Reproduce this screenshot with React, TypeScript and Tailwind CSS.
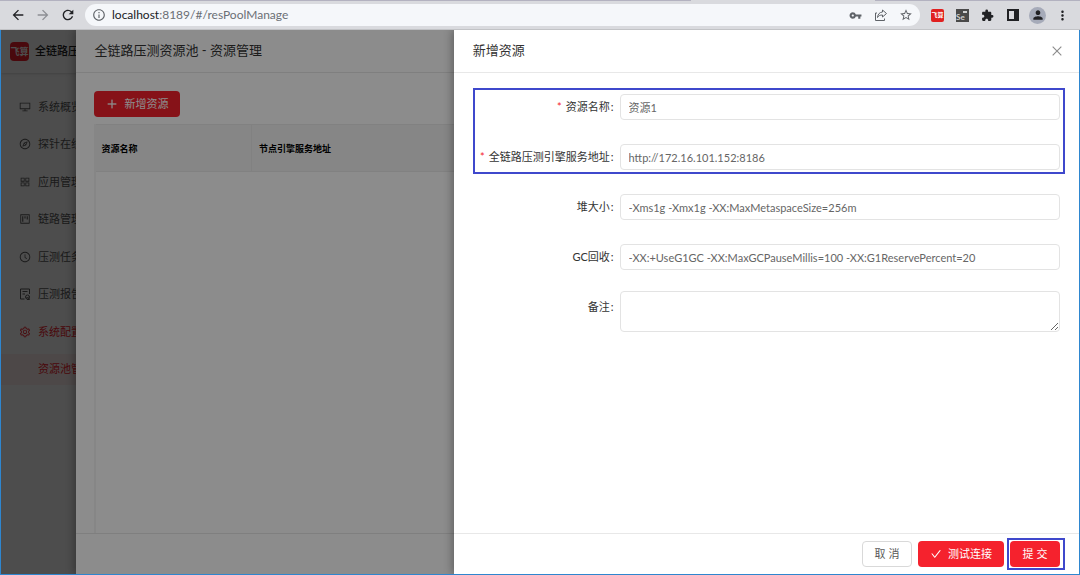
import type { ReactNode } from "react"
import {
  AiOutlineAppstore,
  AiOutlineCheck,
  AiOutlineClockCircle,
  AiOutlineClose,
  AiOutlineCompass,
  AiOutlineDesktop,
  AiOutlinePlus,
  AiOutlineProject,
  AiOutlineSetting,
} from "react-icons/ai"
import {
  MdArrowBack,
  MdArrowForward,
  MdExtension,
  MdInfoOutline,
  MdMoreVert,
  MdPerson,
  MdRefresh,
  MdStarBorder,
  MdVpnKey,
} from "react-icons/md"

function ReportIcon() {
  return (
    <svg width="12" height="12" viewBox="0 0 24 24" fill="none" stroke="currentColor" strokeWidth="2">
      <path d="M11 22H3V2h18v10" />
      <path d="M7 7h10M7 12h5" />
      <circle cx="17" cy="18" r="4" />
      <path d="M15 18l2 2 3-3M21 21v2h-5" />
    </svg>
  )
}

function ShareIcon() {
  return (
    <svg width="14" height="14" viewBox="0 0 14 14" fill="none" stroke="currentColor" strokeWidth="1">
      <path d="M3 5H1.500v7.500h9V10.500" />
      <path d="M8.500 2l4 3.500-4 3.500V7C6 7 4.500 7.700 3.500 9.500 3.700 6.500 5.500 4.200 8.500 4z" />
    </svg>
  )
}

function SidePanelIcon() {
  return (
    <svg width="12" height="12" viewBox="0 0 12 12">
      <path fill="#202124" fillRule="evenodd" d="M0 0h12v12H0zM2 2v8h5V2z" />
    </svg>
  )
}

function BrowserBar() {
  return (
    <header className="flex flex-col h-[30px] shrink-0 bg-[#d9dade] border-b border-[#c2c3c6]">
      <div className="flex h-px justify-between">
        <div className="w-[64%] bg-[#b3b2c0]" />
        <div className="w-[19%] bg-[#b3b2c0]" />
      </div>
      <div className="flex flex-1 items-center pl-[10px] pr-[5px]">
        <nav className="flex items-center gap-[9px] text-[#202124]">
          <button type="button" aria-label="后退"><MdArrowBack size={16} /></button>
          <button type="button" aria-label="前进" className="text-[#8d8f94]"><MdArrowForward size={16} /></button>
          <button type="button" aria-label="刷新"><MdRefresh size={16} /></button>
        </nav>
        <div className="flex flex-1 items-center h-[22px] ml-[9px] pl-[7px] pr-[2px] rounded-full bg-[#f5f7fa] text-[#5f6368]">
          <MdInfoOutline size={14} />
          <p className="flex-1 ml-[6px] text-[12px] leading-4 text-[#6b6f75]">
            <span className="text-[#202124]">localhost</span>:8189/#/resPoolManage
          </p>
          <div className="grid grid-cols-[25px_25px_25px] justify-items-center items-center">
            <button type="button" aria-label="密码"><MdVpnKey size={13} /></button>
            <button type="button" aria-label="分享"><ShareIcon /></button>
            <button type="button" aria-label="收藏"><MdStarBorder size={14} /></button>
          </div>
        </div>
        <div className="grid grid-cols-[25px_25px_25px_25px_25px_25px] justify-items-center items-center ml-[5px] text-[#202124]">
          <span className="flex items-center justify-center w-[13px] h-[13px] rounded-xs bg-[#e02020] text-[6px] leading-none font-bold text-white">
            飞算
          </span>
          <span className="flex items-end w-[13px] h-[13px] bg-[#4a4a4a] text-[8px] leading-[9px] font-bold text-[#d0d0d0] relative">
            Se
            <i className="absolute right-0.5 top-0.5 w-1 h-0.5 bg-[#d0d0d0]" />
          </span>
          <button type="button" aria-label="扩展程序"><MdExtension size={13} /></button>
          <button type="button" aria-label="侧边栏"><SidePanelIcon /></button>
          <span className="flex items-center justify-center w-[17px] h-[17px] rounded-full bg-[#a6abb9]">
            <MdPerson size={14} />
          </span>
          <button type="button" aria-label="更多"><MdMoreVert size={15} /></button>
        </div>
      </div>
    </header>
  )
}

const menu = [
  { label: "系统概览", icon: <AiOutlineDesktop size={12} /> },
  { label: "探针在线", icon: <AiOutlineCompass size={12} /> },
  { label: "应用管理", icon: <AiOutlineAppstore size={12} /> },
  { label: "链路管理", icon: <AiOutlineProject size={12} /> },
  { label: "压测任务", icon: <AiOutlineClockCircle size={12} /> },
  { label: "压测报告", icon: <ReportIcon /> },
  { label: "系统配置", icon: <AiOutlineSetting size={12} />, active: true },
]

function Sidebar() {
  return (
    <aside className="w-[148px] h-full bg-white">
      <div className="flex items-center h-[43px] pl-[9px] gap-[6px] shadow-sm">
        <span className="flex items-center justify-center w-[19px] h-[19px] rounded-sm bg-[#f5222d] text-[9px] leading-none font-bold text-white">
          飞算
        </span>
        <span className="text-[11px] font-medium text-[#222] whitespace-nowrap">全链路压测</span>
      </div>
      <ul className="grid grid-rows-8 h-[300px] mt-[15px] text-[11px] text-[#595959]">
        {menu.map((item) => (
          <li key={item.label} className="flex items-center">
            <a
              href="#"
              className={item.active ? "flex items-center gap-[7px] pl-[18px] text-[#f5222d]" : "flex items-center gap-[7px] pl-[18px]"}
            >
              {item.icon}
              {item.label}
            </a>
          </li>
        ))}
        <li className="flex items-center">
          <a href="#" className="flex flex-1 items-center h-[31px] pl-[37px] bg-[#fff1f0] text-[#f5222d]">
            资源池管理
          </a>
        </li>
      </ul>
    </aside>
  )
}

function PoolDrawer() {
  return (
    <section className="absolute inset-y-0 right-0 w-[93%] flex flex-col bg-white shadow-[-2px_0_8px_rgba(0,0,0,0.3)]">
      <h1 className="flex items-center h-[43px] pl-[18px] border-b border-[#e8e8e8] text-[13px] text-[#333]">
        全链路压测资源池 - 资源管理
      </h1>
      <div className="flex flex-1 flex-col items-start pl-[18px] pt-[18px]">
        <button type="button" className="flex items-center justify-center gap-[6px] w-[86px] h-[26px] rounded-sm bg-[#f5222d] text-[11px] text-white">
          <AiOutlinePlus size={12} strokeWidth={30} />
          新增资源
        </button>
        <div className="flex-1 w-full mt-[7px] border-l-2 border-[#f5f5f5]">
          <table className="w-full table-fixed border-collapse text-[9px] text-black">
            <thead>
              <tr className="h-[47px] bg-[#f5f5f5] border-y border-[#ebebeb]">
                <th className="w-[155px] pl-[5px] pt-0.5 text-left font-bold border-r border-[#ebebeb]">资源名称</th>
                <th className="pl-[7px] pt-0.5 text-left font-bold">节点引擎服务地址</th>
              </tr>
            </thead>
          </table>
        </div>
      </div>
      <footer className="h-[41px] border-t border-[#e8e8e8]" />
    </section>
  )
}

function Field({ id, label, required, children }: { id: string; label: string; required?: boolean; children: ReactNode }) {
  return (
    <div className="grid grid-cols-[1fr_3fr]">
      <label htmlFor={id} className="flex items-center justify-end h-[26px] pt-px pr-[6px] whitespace-nowrap text-[#333]">
        {required && <span className="mr-1 text-[#f5222d]">*</span>}
        {label}
        <span className="ml-px">:</span>
      </label>
      {children}
    </div>
  )
}

const inputClass = "w-full h-[26px] px-2 border border-[#e3e3e3] rounded-sm bg-white text-[#666] outline-none"

function AddDrawer() {
  return (
    <section className="absolute inset-y-0 right-0 w-[58%] flex flex-col bg-white text-[11px] shadow-[-2px_0_8px_rgba(0,0,0,0.3)]">
      <div className="flex items-center justify-between h-[43px] pl-[19px] pr-[15px] border-b border-[#e8e8e8]">
        <h2 className="text-[13px] text-[#333]">新增资源</h2>
        <button type="button" aria-label="关闭" className="text-[#8c8c8c]">
          <AiOutlineClose size={14} />
        </button>
      </div>
      <form className="flex flex-1 flex-col gap-6 px-[19px] pt-[21px]">
        <div className="relative flex flex-col gap-6">
          <Field id="name" label="资源名称" required>
            <input id="name" type="text" defaultValue="资源1" className={inputClass} />
          </Field>
          <Field id="url" label="全链路压测引擎服务地址" required>
            <input id="url" type="text" defaultValue="http://172.16.101.152:8186" className={inputClass} />
          </Field>
          <div className="absolute left-0 -right-[5px] -top-[6px] -bottom-1 border-2 border-[#3f48cc] pointer-events-none" />
        </div>
        <Field id="heap" label="堆大小">
          <input id="heap" type="text" defaultValue="-Xms1g -Xmx1g -XX:MaxMetaspaceSize=256m" className={inputClass} />
        </Field>
        <Field id="gc" label="GC回收">
          <input id="gc" type="text" defaultValue="-XX:+UseG1GC -XX:MaxGCPauseMillis=100 -XX:G1ReservePercent=20" className={inputClass} />
        </Field>
        <Field id="remark" label="备注">
          <textarea id="remark" className="-mt-[3px] w-full h-[41px] px-2 py-1 border border-[#e3e3e3] rounded-sm bg-white outline-none resize-y" />
        </Field>
      </form>
      <footer className="flex items-center justify-end gap-[6px] h-[41px] px-[19px] border-t border-[#e8e8e8]">
        <button type="button" className="w-[50px] h-[26px] border border-[#d9d9d9] rounded-sm text-[#595959]">取 消</button>
        <button type="button" className="flex items-center justify-center gap-[6px] w-[86px] h-[26px] rounded-sm bg-[#f5222d] text-white">
          <AiOutlineCheck size={12} />
          测试连接
        </button>
        <div className="relative">
          <button type="submit" className="w-[50px] h-[26px] rounded-sm bg-[#f5222d] text-white">提 交</button>
          <div className="absolute -left-[3px] -right-[5px] -inset-y-[3px] border-2 border-[#3f48cc] pointer-events-none" />
        </div>
      </footer>
    </section>
  )
}

export default function App() {
  return (
    <div className="flex flex-col h-screen font-['Lato','Noto_Sans_CJK_SC',sans-serif]">
      <BrowserBar />
      <main className="flex-1 border-x border-b border-[#2e86cf]">
        <div className="relative h-full overflow-hidden">
          <Sidebar />
          <div className="absolute inset-0 bg-black/45" />
          <PoolDrawer />
          <div className="absolute inset-0 bg-black/45" />
          <AddDrawer />
        </div>
      </main>
    </div>
  )
}
